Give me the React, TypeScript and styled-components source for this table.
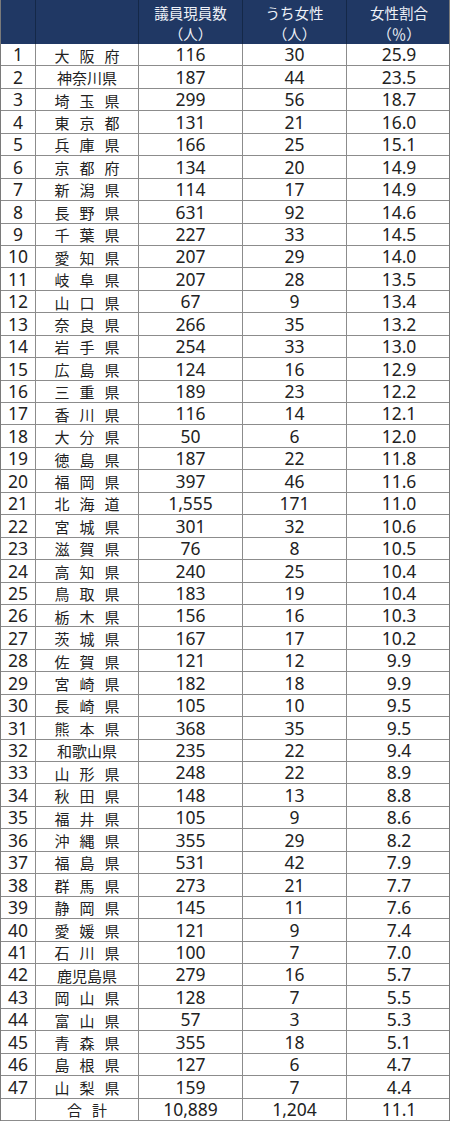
import styled, { createGlobalStyle } from 'styled-components';

const GlobalStyle = createGlobalStyle`
  html, body {
    margin: 0;
    padding: 0;
    background: #ffffff;
  }
`;

const COLS = '35px 103px 104px 104px 104px';

const Table = styled.div`
  width: 450px;
  font-family: 'Noto Sans', 'Noto Sans CJK JP', sans-serif;
  color: #222222;
  box-sizing: border-box;
  border-left: 1px solid #7a7a7a;
  border-right: 1px solid #7a7a7a;
`;

const HeadRow = styled.div`
  display: grid;
  grid-template-columns: ${COLS};
  height: 44px;
  background: #203864;
`;

const HeadCell = styled.div`
  display: flex;
  flex-direction: column;
  align-items: center;
  justify-content: center;
  box-sizing: border-box;
  padding-top: 2px;
  border-right: 1px solid #142848;
  font-family: 'Noto Sans CJK JP', sans-serif;
  font-size: 14.5px;
  line-height: 21px;
  color: #eef1f7;
  &:last-child {
    border-right: none;
  }
`;

const Row = styled.div`
  display: grid;
  grid-template-columns: ${COLS};
  height: 22.44px;
  box-sizing: border-box;
  border-bottom: 1px solid #8c8c8c;
`;

const Cell = styled.div`
  display: flex;
  align-items: center;
  justify-content: center;
  box-sizing: border-box;
  border-right: 1px solid #8c8c8c;
  font-size: 17.5px;
  line-height: 1;
  white-space: pre;
  padding-top: 1px;
  &:last-child {
    border-right: none;
  }
`;

// prefecture names: three-character names are spread out, as in the source sheet
const Name = styled.span<{ $spread: number }>`
  font-family: 'Noto Sans CJK JP', sans-serif;
  font-size: 15px;
  letter-spacing: ${(p) => p.$spread}px;
  margin-right: ${(p) => -p.$spread}px;
`;

const rows: [string, string, string, string][] = [
  ['大阪府', '116', '30', '25.9'],
  ['神奈川県', '187', '44', '23.5'],
  ['埼玉県', '299', '56', '18.7'],
  ['東京都', '131', '21', '16.0'],
  ['兵庫県', '166', '25', '15.1'],
  ['京都府', '134', '20', '14.9'],
  ['新潟県', '114', '17', '14.9'],
  ['長野県', '631', '92', '14.6'],
  ['千葉県', '227', '33', '14.5'],
  ['愛知県', '207', '29', '14.0'],
  ['岐阜県', '207', '28', '13.5'],
  ['山口県', '67', '9', '13.4'],
  ['奈良県', '266', '35', '13.2'],
  ['岩手県', '254', '33', '13.0'],
  ['広島県', '124', '16', '12.9'],
  ['三重県', '189', '23', '12.2'],
  ['香川県', '116', '14', '12.1'],
  ['大分県', '50', '6', '12.0'],
  ['徳島県', '187', '22', '11.8'],
  ['福岡県', '397', '46', '11.6'],
  ['北海道', '1,555', '171', '11.0'],
  ['宮城県', '301', '32', '10.6'],
  ['滋賀県', '76', '8', '10.5'],
  ['高知県', '240', '25', '10.4'],
  ['鳥取県', '183', '19', '10.4'],
  ['栃木県', '156', '16', '10.3'],
  ['茨城県', '167', '17', '10.2'],
  ['佐賀県', '121', '12', '9.9'],
  ['宮崎県', '182', '18', '9.9'],
  ['長崎県', '105', '10', '9.5'],
  ['熊本県', '368', '35', '9.5'],
  ['和歌山県', '235', '22', '9.4'],
  ['山形県', '248', '22', '8.9'],
  ['秋田県', '148', '13', '8.8'],
  ['福井県', '105', '9', '8.6'],
  ['沖縄県', '355', '29', '8.2'],
  ['福島県', '531', '42', '7.9'],
  ['群馬県', '273', '21', '7.7'],
  ['静岡県', '145', '11', '7.6'],
  ['愛媛県', '121', '9', '7.4'],
  ['石川県', '100', '7', '7.0'],
  ['鹿児島県', '279', '16', '5.7'],
  ['岡山県', '128', '7', '5.5'],
  ['富山県', '57', '3', '5.3'],
  ['青森県', '355', '18', '5.1'],
  ['島根県', '127', '6', '4.7'],
  ['山梨県', '159', '7', '4.4'],
];

export default function App() {
  return (
    <>
      <GlobalStyle />
      <Table>
        <HeadRow>
          <HeadCell />
          <HeadCell />
          <HeadCell>
            <span>議員現員数</span>
            <span>（人）</span>
          </HeadCell>
          <HeadCell>
            <span>うち女性</span>
            <span>（人）</span>
          </HeadCell>
          <HeadCell>
            <span>女性割合</span>
            <span>（％）</span>
          </HeadCell>
        </HeadRow>
        {rows.map((r, i) => (
          <Row key={r[0]}>
            <Cell>{i + 1}</Cell>
            <Cell>
              <Name $spread={r[0].length === 3 ? 10 : 0}>{r[0]}</Name>
            </Cell>
            <Cell>{r[1]}</Cell>
            <Cell>{r[2]}</Cell>
            <Cell>{r[3]}</Cell>
          </Row>
        ))}
        <Row>
          <Cell />
          <Cell>
            <Name $spread={10}>合計</Name>
          </Cell>
          <Cell>10,889</Cell>
          <Cell>1,204</Cell>
          <Cell>11.1</Cell>
        </Row>
      </Table>
    </>
  );
}
